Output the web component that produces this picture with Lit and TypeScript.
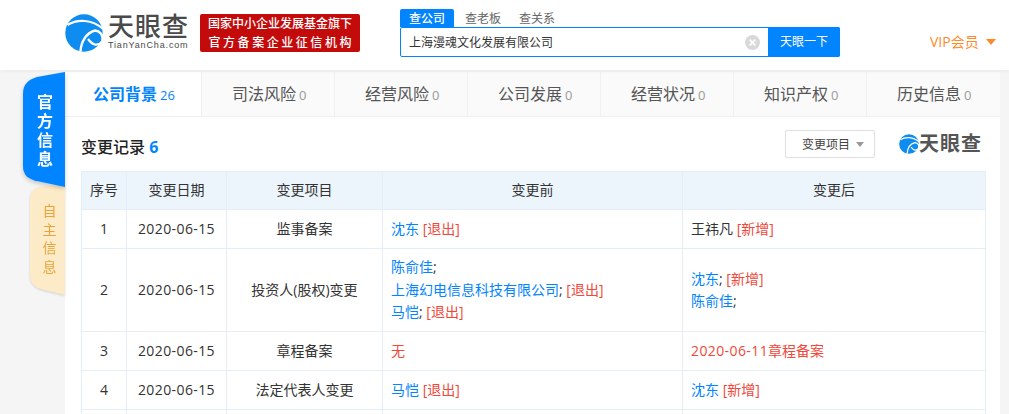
import { LitElement, html, css, svg } from "lit";
import { customElement } from "lit/decorators.js";

const swirl = (size: number) => html`<svg class="swirl" width=${size} height=${size} viewBox="0 0 38 38">
  ${svg`<circle cx="19" cy="19" r="18.7" fill="#0f8cf0"/>
  <path d="M15.5 37.5C16 28 21 19 30 16.5C35 17 38 21 37.6 26" fill="none" stroke="#fff" stroke-width="2.4"/>
  <path d="M23 25C28 32 33 32 37.5 27.5" fill="none" stroke="#fff" stroke-width="2.2"/>
  <path d="M2.5 11C12 5 27 5 38 15" fill="none" stroke="#fff" stroke-width="2.2"/>`}
</svg>`;

type Part = { t: string; c?: string };
type Row = { n: string; d: string; item: string; tall?: boolean; before: Part[][]; after: Part[][] };

const rows: Row[] = [
  {
    n: "1", d: "2020-06-15", item: "监事备案",
    before: [[{ t: "沈东", c: "link" }, { t: " " }, { t: "[退出]", c: "red" }]],
    after: [[{ t: "王祎凡" }, { t: " " }, { t: "[新增]", c: "red" }]],
  },
  {
    n: "2", d: "2020-06-15", item: "投资人(股权)变更", tall: true,
    before: [
      [{ t: "陈俞佳", c: "link" }, { t: ";" }],
      [{ t: "上海幻电信息科技有限公司", c: "link" }, { t: "; " }, { t: "[退出]", c: "red" }],
      [{ t: "马恺", c: "link" }, { t: "; " }, { t: "[退出]", c: "red" }],
    ],
    after: [
      [{ t: "沈东", c: "link" }, { t: "; " }, { t: "[新增]", c: "red" }],
      [{ t: "陈俞佳", c: "link" }, { t: ";" }],
    ],
  },
  {
    n: "3", d: "2020-06-15", item: "章程备案",
    before: [[{ t: "无", c: "red" }]],
    after: [[{ t: "2020-06-11", c: "red num" }, { t: "章程备案", c: "red" }]],
  },
  {
    n: "4", d: "2020-06-15", item: "法定代表人变更",
    before: [[{ t: "马恺", c: "link" }, { t: " " }, { t: "[退出]", c: "red" }]],
    after: [[{ t: "沈东", c: "link" }, { t: " " }, { t: "[新增]", c: "red" }]],
  },
];

const tabs: [string, string][] = [
  ["公司背景", "26"], ["司法风险", "0"], ["经营风险", "0"], ["公司发展", "0"],
  ["经营状况", "0"], ["知识产权", "0"], ["历史信息", "0"],
];

@customElement("app-root")
export class AppRoot extends LitElement {
  static styles = css`
    :host { display: block; width: 1009px; height: 414px; overflow: hidden; background: #f5f5f5; font-family: "Open Sans", "Noto Sans CJK SC", sans-serif; color: #333; font-size: 14px; }
    header { height: 70px; background: #fff; box-shadow: 0 1px 4px rgba(0,0,0,.06); display: flex; position: relative; }
    .logo { margin-left: 65px; margin-top: 14px; width: 123px; height: 38px; display: flex; gap: 5px; flex: none; }
    .swirl { flex: none; display: block; }
    .logo-text { display: flex; flex-direction: column; color: #4a4a4a; }
    .logo-cn { font-size: 26px; line-height: 26px; font-weight: 500; letter-spacing: 1px; margin-top: -1px; white-space: nowrap; }
    .logo-en { font-size: 9px; line-height: 11px; letter-spacing: .85px; white-space: nowrap; margin-top: 1px; font-family: "Liberation Sans", sans-serif; }
    .badge { margin-left: 12px; margin-top: 14px; width: 160px; height: 38px; flex: none; background: #c40b0b; border-radius: 2px; color: #fff; font-size: 12px; font-weight: 500; line-height: 19px; text-align: center; display: flex; flex-direction: column; justify-content: center; white-space: nowrap; }
    .badge .b { letter-spacing: 2.55px; margin-right: -2.55px; }
    .search { margin-left: 40px; margin-top: 9px; width: 440px; flex: none; }
    .stabs { display: flex; height: 18px; font-size: 12px; line-height: 19px; color: #666; }
    .stabs span { text-align: center; flex: none; }
    .stabs span:nth-child(1) { width: 54px; background: #0084ff; color: #fff; border-radius: 2px 2px 0 0; font-weight: 500; }
    .stabs span:nth-child(2) { width: 54px; margin-left: 2px; }
    .stabs span:nth-child(3) { width: 54px; }
    .box { display: flex; height: 30px; width: 440px; box-sizing: border-box; border: 1px solid #0084ff; border-radius: 2px; background: #fff; align-items: center; }
    .q { flex: 1; padding-left: 8px; font-size: 12px; color: #333; display: flex; align-items: center; justify-content: space-between; }
    .clear { width: 15px; height: 15px; margin-right: 8px; display: block; }
    .go { width: 72px; height: 30px; margin: -1px -1px -1px 0; background: #0084ff; color: #fff; font-size: 12px; line-height: 30px; text-align: center; border-radius: 0 2px 2px 0; }
    .vip { margin-left: 90px; margin-top: 33px; color: #ff8a2b; font-size: 14px; line-height: 18px; display: flex; align-items: center; gap: 7px; white-space: nowrap; height: 18px; }
    .tri-o { width: 0; height: 0; border-left: 5px solid transparent; border-right: 5px solid transparent; border-top: 6px solid #ff8a2b; }

    .wrap { display: flex; margin-top: 2px; }
    .side { width: 42px; margin-left: 23px; flex: none; position: relative; }
    .side-tab { position: absolute; right: 0; display: flex; justify-content: center; }
    .side-tab svg { position: absolute; inset: 0; overflow: visible; }
    .side-tab span { position: relative; writing-mode: vertical-rl; white-space: nowrap; display: block; height: fit-content; }
    .side-a { top: 0; left: 0; width: 42px; height: 115px; color: #fff; font-weight: 700; font-size: 16px; line-height: 20px; letter-spacing: 3px; padding-top: 22px; box-sizing: border-box; z-index: 2; filter: drop-shadow(0 2px 2px rgba(0,0,0,.2)); }
    .side-b { top: 113px; left: 7px; width: 35px; height: 110px; color: #e8a33a; font-size: 14px; line-height: 18px; letter-spacing: 4.5px; padding-top: 19px; padding-left: 2px; box-sizing: border-box; filter: drop-shadow(0 1px 1px rgba(0,0,0,.15)); }
    main { width: 935px; flex: none; background: #fff; }
    nav { display: flex; height: 45px; background: #fff; }
    .tab { width: 133px; box-sizing: border-box; background: #fafafa; border-bottom: 1px solid #eef0f2; border-right: 1px solid #eef0f2; font-size: 16px; line-height: 44px; color: #555; padding-left: 30px; white-space: nowrap; }
    .tab:last-child { border-right: 0; }
    .tab small { font-size: 13px; color: #999; margin-left: 3px; }
    .tab.on { width: 137px; background: #fff; color: #0084ff; font-weight: 700; padding-left: 28px; }
    .tab.on small { color: #0084ff; font-weight: 400; }
    .content { padding: 0 16px; }
    .title-row { height: 54px; display: flex; align-items: center; justify-content: space-between; }
    .title { font-size: 16px; font-weight: 500; color: #222; margin-top: 4px; }
    .title b { color: #0084ff; font-weight: 700; }
    .tools { display: flex; align-items: center; }
    .sel { width: 90px; height: 28px; box-sizing: border-box; border: 1px solid #e0e0e0; border-radius: 2px; font-size: 12px; color: #444; display: flex; align-items: center; justify-content: flex-end; gap: 6px; padding-right: 10px; }
    .tri { width: 0; height: 0; border-left: 4.5px solid transparent; border-right: 4.5px solid transparent; border-top: 5px solid #999; }
    .mark { margin-left: 24px; display: flex; align-items: center; gap: 0; color: #555; font-size: 20px; font-weight: 700; line-height: 24px; letter-spacing: 1px; white-space: nowrap; width: 85px; flex: none; }
    table { border-collapse: collapse; width: 904px; table-layout: fixed; font-size: 14px; }
    th, td { border: 1px solid #e5eef6; padding: 0 8px; text-align: center; font-weight: 400; color: #333; line-height: 22.5px; height: 39px; box-sizing: border-box; }
    th { background: #edf5fc; height: 38px; }
    tr.tall td { height: 83px; }
    td.l { text-align: left; }
    .num { letter-spacing: .4px; }
    .link { color: #0084ff; }
    .red { color: #f1483a; }
  `;

  render() {
    return html`
      <header>
        <div class="logo">
          ${swirl(38)}
          <div class="logo-text">
            <div class="logo-cn">天眼查</div>
            <div class="logo-en">TianYanCha.com</div>
          </div>
        </div>
        <div class="badge"><div>国家中小企业发展基金旗下</div><div class="b">官方备案企业征信机构</div></div>
        <div class="search">
          <div class="stabs"><span>查公司</span><span>查老板</span><span>查关系</span></div>
          <div class="box">
            <div class="q">上海漫魂文化发展有限公司
              <svg class="clear" viewBox="0 0 16 16"><circle cx="8" cy="8" r="8" fill="#d9d9d9"/><path d="M5 5L11 11M11 5L5 11" stroke="#fff" stroke-width="2"/></svg>
            </div>
            <div class="go">天眼一下</div>
          </div>
        </div>
        <div class="vip">VIP会员<i class="tri-o"></i></div>
      </header>
      <div class="wrap">
        <div class="side">
          <div class="side-tab side-b">
            <svg width="35" height="110" viewBox="0 0 35 110"><path d="M35 0V110L14 105C5 103 0 98 0 90V16C0 8 3 3 10 2Z" fill="#fdebc8"/></svg>
            <span>自主信息</span>
          </div>
          <div class="side-tab side-a">
            <svg width="42" height="115" viewBox="0 0 42 115"><path d="M42 0V115L14 109C5 107 0 103 0 94V22C0 12 5 8 14 5Z" fill="#0084ff"/></svg>
            <span>官方信息</span>
          </div>
        </div>
        <main>
          <nav>
            ${tabs.map(([t, n], i) => html`<div class="tab ${i === 0 ? "on" : ""}">${t}<small>${n}</small></div>`)}
          </nav>
          <div class="content">
            <div class="title-row">
              <div class="title">变更记录 <b>6</b></div>
              <div class="tools">
                <div class="sel">变更项目<i class="tri"></i></div>
                <div class="mark">${swirl(20)}<span>天眼查</span></div>
              </div>
            </div>
            <table>
              <colgroup><col style="width:45px"/><col style="width:100px"/><col style="width:156px"/><col style="width:300px"/><col style="width:303px"/></colgroup>
              <tr><th>序号</th><th>变更日期</th><th>变更项目</th><th>变更前</th><th>变更后</th></tr>
              ${rows.map((r) => html`<tr class=${r.tall ? "tall" : ""}>
                <td>${r.n}</td><td class="num">${r.d}</td><td>${r.item}</td>
                <td class="l">${this.cell(r.before)}</td>
                <td class="l">${this.cell(r.after)}</td>
              </tr>`)}
              <tr><td></td><td></td><td></td><td></td><td></td></tr>
            </table>
          </div>
        </main>
      </div>
    `;
  }

  cell(lines: Part[][]) {
    return lines.map((l) => html`<div>${l.map((p) => html`<span class=${p.c ?? ""}>${p.t}</span>`)}</div>`);
  }
}
